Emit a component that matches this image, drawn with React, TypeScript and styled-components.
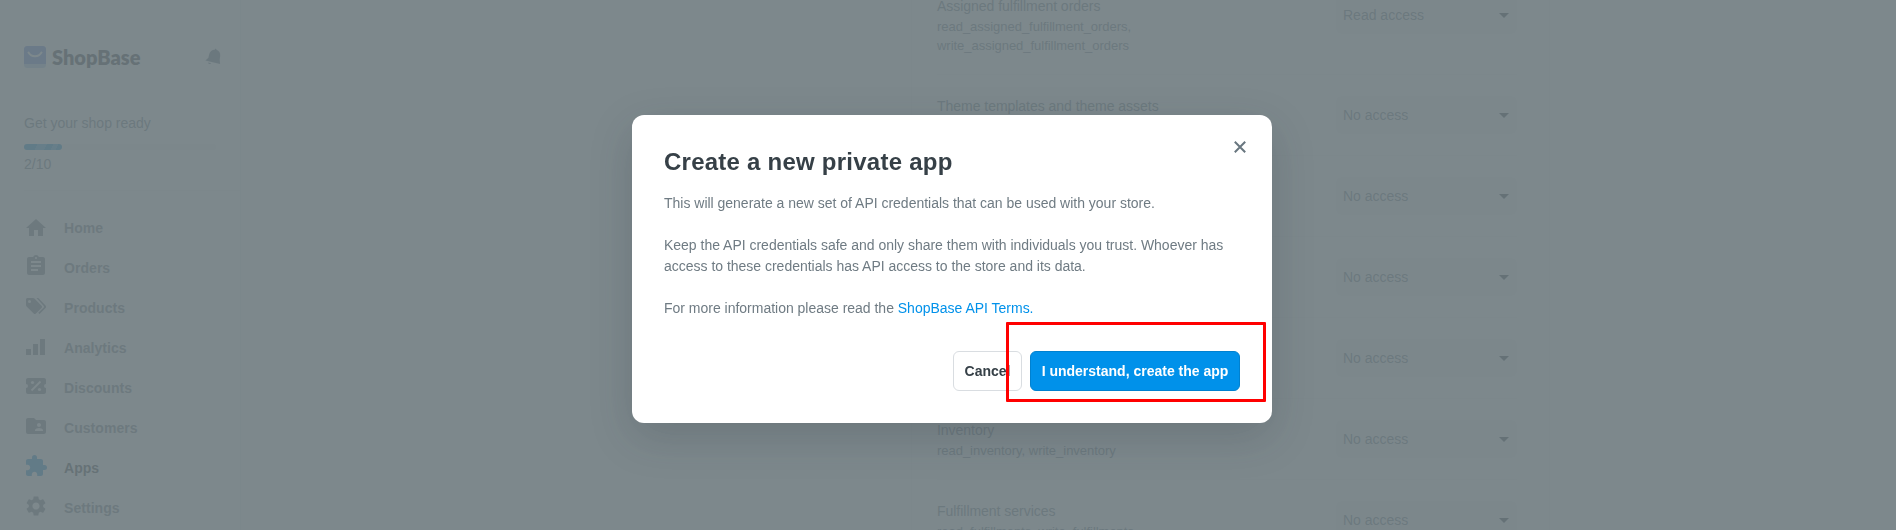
import React from "react";
import styled, { createGlobalStyle } from "styled-components";
import {
  MdHome,
  MdAssignment,
  MdFolderShared,
  MdExtension,
  MdSettings,
} from "react-icons/md";

const GlobalStyle = createGlobalStyle`
  *, *::before, *::after { box-sizing: border-box; }
  body {
    margin: 0;
    overflow: hidden;
    font-family: "Liberation Sans", Arial, sans-serif;
    font-size: 14px;
    line-height: 21px;
    color: #637381;
    background: #fafafa;
  }
`;

const Page = styled.div`
  display: flex;
  height: 530px;
  overflow: hidden;
`;

const Sidebar = styled.aside`
  width: 241px;
  flex: none;
  padding: 46px 19px 0 24px;
  border-right: 1px solid #eeeff1;
`;

const Brand = styled.div`
  display: flex;
  align-items: center;
  height: 22px;
`;

const BrandName = styled.span`
  margin-left: 6px;
  flex: 1;
  font-family: Lato, sans-serif;
  font-weight: 800;
  font-size: 20px;
  letter-spacing: 0;
  color: #2d3338;
`;

const Setup = styled.div`
  margin: 45px 5px 0 0;
`;

const Track = styled.div`
  height: 6px;
  margin: 10px 0 4px;
  border-radius: 3px;
  background: #f4f5f6;
`;

const Fill = styled.div`
  width: 38px;
  height: 6px;
  border-radius: 3px;
  background: linear-gradient(115deg, #0088cc 0 33%, #3aa5e0 33% 56%, #0088cc 56% 72%, #3aa5e0 72% 84%, #0088cc 84%);
`;

const Nav = styled.nav`
  margin: 15px -19px 0 0;
  padding-top: 17px;
  border-top: 1px solid #f3f4f5;
`;

const NavItem = styled.a<{ $active?: boolean }>`
  display: flex;
  align-items: center;
  height: 40px;
  font-weight: 700;
  letter-spacing: 0.05px;
  color: ${(p) => (p.$active ? "#2f363c" : "#6b7883")};
  svg {
    width: 24px;
    height: 24px;
    margin: 0 16px 4px 0;
    color: ${(p) => (p.$active ? "#1086d0" : "#6b7883")};
  }
  &:first-child svg { margin-bottom: 0; }
`;

const Permissions = styled.main`
  width: 639px;
  flex: none;
  margin: -40px 0 0 670px;
  padding: 15px 32px 0 25px;
  border: solid #f1f2f3;
  border-width: 0 1px;
`;

const Permission = styled.section`
  display: flex;
  justify-content: space-between;
  align-items: flex-start;
  padding: 20px 0;
  border-bottom: 1px solid #f2f3f4;
`;

const Scopes = styled.div`
  position: relative;
  top: 1px;
  width: 230px;
  min-height: 40px;
  font-size: 13px;
  line-height: 19px;
  letter-spacing: -0.03px;
`;

const ScopeTitle = styled.div`
  font-size: 14px;
  line-height: 21px;
`;

const Select = styled.div`
  display: flex;
  align-items: center;
  justify-content: space-between;
  width: 181px;
  height: 38px;
  margin: 1px 0 -2px;
  padding: 0 8px 0 7px;
  border-radius: 6px;
  background: #f5f6f7;
`;

const Caret = styled.span`
  border: 5px solid transparent;
  border-top-color: #27313b;
  border-bottom: 0;
`;

const Backdrop = styled.div`
  position: fixed;
  inset: 0;
  display: flex;
  align-items: center;
  justify-content: center;
  padding: 8px 0 0 8px;
  background: rgba(109, 121, 126, 0.89);
`;

const Dialog = styled.div`
  position: relative;
  width: 640px;
  height: 308px;
  padding: 32px;
  border-radius: 12px;
  background: #fff;
  box-shadow: 0 14px 44px rgba(33, 43, 54, 0.2);
  color: #6f7b83;
`;

const Title = styled.h2`
  margin: 0 0 16px;
  font-size: 24px;
  line-height: 30px;
  letter-spacing: 0.24px;
  color: #364047;
`;

const Close = styled.button`
  position: absolute;
  top: 26px;
  right: 26px;
  width: 12px;
  height: 12px;
  padding: 0;
  border: 0;
  background: none;
  svg { display: block; }
`;

const Text = styled.p`
  margin: 0 0 21px;
  letter-spacing: -0.012px;
`;

const TermsLink = styled.a`
  color: #0091ea;
`;

const Actions = styled.div`
  display: flex;
  justify-content: flex-end;
  gap: 8px;
  margin-top: 32px;
`;

const Button = styled.button<{ $primary?: boolean }>`
  width: ${(p) => (p.$primary ? 210 : 69)}px;
  height: 40px;
  padding: 0;
  border: 1px solid ${(p) => (p.$primary ? "#0081d0" : "#d9dde1")};
  border-radius: 6px;
  background: ${(p) => (p.$primary ? "#0091ea" : "#fff")};
  color: ${(p) => (p.$primary ? "#fff" : "#364047")};
  font: 700 14px "Liberation Sans", Arial, sans-serif;
`;

const Highlight = styled.div`
  position: absolute;
  left: 374px;
  top: 207px;
  width: 260px;
  height: 80px;
  border: 3px solid #f00;
  border-radius: 1px;
`;

const LogoMark = () => (
  <svg width="22" height="22" viewBox="0 0 22 22">
    <rect width="22" height="22" rx="3.5" fill="#a9cbea" />
    <path d="M3.5 0h15A3.5 3.5 0 0 1 22 3.5V18H0V3.5A3.5 3.5 0 0 1 3.5 0Z" fill="#5c80d8" />
    <path d="M4.500 6.500c3 5 10 5 13 0" fill="none" stroke="#fff" strokeWidth="2" strokeLinecap="round" />
  </svg>
);

const Bell = () => (
  <svg width="16" height="18" viewBox="0 0 16 18" fill="#5d7184">
    <path d="M10.2.8c.7-.3 1.300 0 1.300.9 2.600 1 4 3.300 3.700 6l-.5 4 .4 4.300L.4 12.600l3-2.800.8-3.600c.7-2.700 2.700-4.500 5.500-4.500Z" />
    <path d="M3 14.500l3.200.8c-.6 1.200-2.700 1-3.200-.8Z" />
  </svg>
);

const Tags = () => (
  <svg viewBox="0 0 24 24" fill="currentColor">
    <path fillRule="evenodd" d="M3.500 4H9c.6 0 1 .2 1.400.6l7.100 7.100c.7.700.7 1.500 0 2.200l-5.600 5.600c-.7.700-1.500.7-2.200 0l-7.100-7.100C2.200 12 2 11.600 2 11V5.500C2 4.700 2.700 4 3.500 4Zm2 2A1.500 1.500 0 1 0 5.500 9 1.500 1.500 0 0 0 5.500 6Z" />
    <path d="M12.500 4h1.800l7.200 7.400c.8.900.8 1.700 0 2.500l-6 6-1.200-1.200 5.500-5.300c.4-.4.4-.9 0-1.300Z" />
  </svg>
);

const Bars = () => (
  <svg viewBox="0 0 24 24" fill="currentColor">
    <path d="M2 15h5v6H2zM9 10h5v11H9zM16 5h5v16h-5z" />
  </svg>
);

const Discount = () => (
  <svg viewBox="0 0 24 24" fill="none">
    <path fill="currentColor" d="M4 4h16c1.100 0 2 .9 2 2v4a2 2 0 0 0 0 4v4c0 1.100-.9 2-2 2H4c-1.100 0-2-.9-2-2v-4a2 2 0 0 0 0-4V6c0-1.100.9-2 2-2Z" />
    <path d="M7.500 16.500l9-9" stroke="#fafafa" strokeWidth="1.800" />
    <circle cx="8.500" cy="8.500" r="1.600" fill="#fafafa" />
    <circle cx="15.500" cy="15.500" r="1.600" fill="#fafafa" />
  </svg>
);

const navItems = [
  { label: "Home", icon: <MdHome /> },
  { label: "Orders", icon: <MdAssignment /> },
  { label: "Products", icon: <Tags /> },
  { label: "Analytics", icon: <Bars /> },
  { label: "Discounts", icon: <Discount /> },
  { label: "Customers", icon: <MdFolderShared /> },
  { label: "Apps", icon: <MdExtension />, active: true },
  { label: "Settings", icon: <MdSettings /> },
];

const permissions: { title?: string; scopes?: string[]; access: string }[] = [
  {
    title: "Assigned fulfillment orders",
    scopes: ["read_assigned_fulfillment_orders,", "write_assigned_fulfillment_orders"],
    access: "Read access",
  },
  { title: "Theme templates and theme assets", access: "No access" },
  { access: "No access" },
  { access: "No access" },
  { access: "No access" },
  { title: "Inventory", scopes: ["read_inventory, write_inventory"], access: "No access" },
  { title: "Fulfillment services", scopes: ["read_fulfillments, write_fulfillments"], access: "No access" },
];

export default function App() {
  return (
    <>
      <GlobalStyle />
      <Page>
        <Sidebar>
          <Brand>
            <LogoMark />
            <BrandName>ShopBase</BrandName>
            <Bell />
          </Brand>
          <Setup>
            Get your shop ready
            <Track>
              <Fill />
            </Track>
            2/10
          </Setup>
          <Nav>
            {navItems.map((item) => (
              <NavItem key={item.label} $active={item.active}>
                {item.icon}
                {item.label}
              </NavItem>
            ))}
          </Nav>
        </Sidebar>
        <Permissions>
          {permissions.map((item, index) => (
            <Permission key={index}>
              <Scopes>
                {item.title && <ScopeTitle>{item.title}</ScopeTitle>}
                {item.scopes?.map((scope) => (
                  <div key={scope}>{scope}</div>
                ))}
              </Scopes>
              <Select>
                {item.access}
                <Caret />
              </Select>
            </Permission>
          ))}
        </Permissions>
      </Page>
      <Backdrop>
        <Dialog role="dialog">
          <Title>Create a new private app</Title>
          <Close aria-label="Close">
            <svg width="12" height="12" viewBox="0 0 12 12">
              <path d="M.8.8l10.400 10.400M11.200.8L.8 11.200" stroke="#68767f" strokeWidth="2" />
            </svg>
          </Close>
          <Text>This will generate a new set of API credentials that can be used with your store.</Text>
          <Text>
            Keep the API credentials safe and only share them with individuals you trust. Whoever has access to these
            credentials has API access to the store and its data.
          </Text>
          <Text>
            For more information please read the <TermsLink>ShopBase API Terms.</TermsLink>
          </Text>
          <Actions>
            <Button>Cancel</Button>
            <Button $primary>I understand, create the app</Button>
          </Actions>
          <Highlight />
        </Dialog>
      </Backdrop>
    </>
  );
}
